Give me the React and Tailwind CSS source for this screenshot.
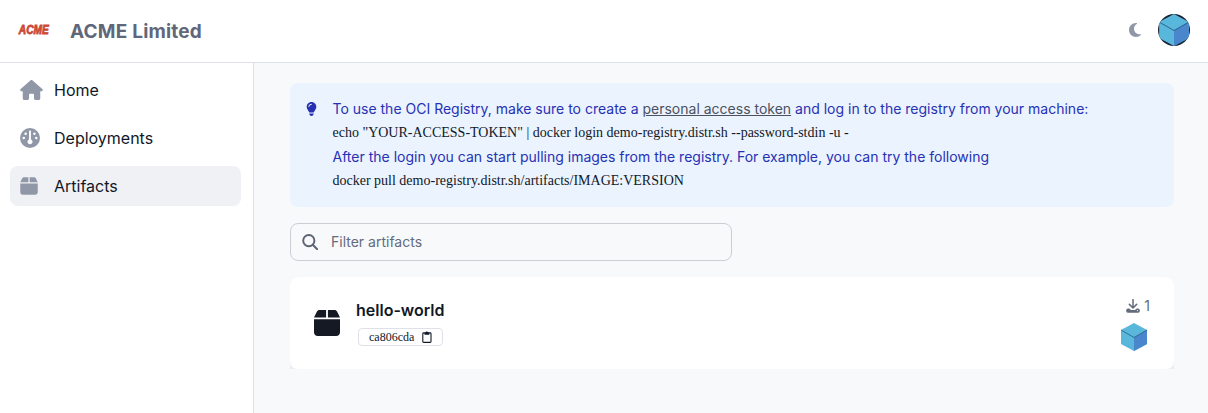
import { FaHouse, FaGauge, FaBox, FaMoon, FaLightbulb } from "react-icons/fa6";

function Cube({ className }) {
  return (
    <svg viewBox="0 0 26 28" className={className}>
      <path d="M13 0 26 7 26 21 13 28 0 21 0 7Z" fill="#59b7dc" />
      <path d="M26 7 26 21 13 28 13 14.5Z" fill="#4a86cb" />
      <path d="M0 7 13 14.5 26 7" fill="none" stroke="#285d86" strokeWidth=".8" />
    </svg>
  );
}

function NavItem({ icon, label, active }) {
  return (
    <a className={`flex h-10 items-center rounded-lg pl-[10px] text-base text-gray-900 ${active ? "bg-[#f0f1f5]" : ""}`}>
      <span className="flex w-[34px] text-[#9098a8]">{icon}</span>
      {label}
    </a>
  );
}

export default function App() {
  return (
    <div className="flex h-[413px] w-[1208px] flex-col overflow-hidden bg-[#f8f9fb] font-['Inter',sans-serif]">
      <header className="flex h-[63px] shrink-0 items-center border-b border-[#dfe1e8] bg-white pb-0.5 pl-[18px] pr-[18px]">
        <svg viewBox="0 0 34 16" className="mr-[18px] h-4 w-[34px] overflow-visible">
          <text x="0.8" y="12" textLength="30" lengthAdjust="spacingAndGlyphs" fill="#cb4936" stroke="#cb4936" strokeWidth=".8" fontFamily="Liberation Sans" fontWeight="700" fontStyle="italic" fontSize="12">ACME</text>
        </svg>
        <h1 className="pt-1 text-[19px] font-bold leading-7 tracking-[0.2px] text-[#606779]">ACME Limited</h1>
        <FaMoon className="ml-auto h-4 w-4 text-[#9098a8]" />
        <div className="ml-[15px] flex size-8 items-center justify-center overflow-hidden rounded-full bg-[#182033]">
          <Cube className="h-8 w-[30px]" />
        </div>
      </header>
      <div className="flex min-h-0 flex-1">
        <nav className="flex w-[254px] shrink-0 flex-col gap-2 border-r border-[#dfe1e8] bg-white pl-[10px] pr-3 pt-[7px]">
          <NavItem icon={<FaHouse className="h-5 w-[23px]" />} label="Home" />
          <NavItem icon={<FaGauge className="size-5" />} label="Deployments" />
          <NavItem icon={<FaBox className="h-5 w-[18px]" />} label="Artifacts" active />
        </nav>
        <main className="flex flex-1 flex-col gap-4 pl-9 pr-[34px] pt-5">
          <section className="flex h-[124px] shrink-0 rounded-lg bg-[#ebf3fe] pl-4 pt-[14px] text-sm">
            <FaLightbulb className="mr-[15.5px] mt-[5px] h-[14px] w-[11px] text-[#2630b0]" />
            <div className="leading-6 text-[#2731b5]">
              <p>
                To use the OCI Registry, make sure to create a <a className="text-[#4b5160] underline">personal access token</a> and log in to the registry from your machine:
              </p>
              <p className="font-['Liberation_Serif',serif] text-gray-900">echo "YOUR-ACCESS-TOKEN" | docker login demo-registry.distr.sh --password-stdin -u -</p>
              <p>After the login you can start pulling images from the registry. For example, you can try the following</p>
              <p className="font-['Liberation_Serif',serif] text-gray-900">docker pull demo-registry.distr.sh/artifacts/IMAGE:VERSION</p>
            </div>
          </section>
          <label className="flex h-[38px] w-[442px] shrink-0 items-center rounded-lg border border-[#cbced5] pl-[11px] text-sm text-[#646b7c]">
            <svg viewBox="0 0 20 20" className="mr-[13px] size-4 text-[#5b6273]" fill="none" stroke="currentColor" strokeWidth="2.4" strokeLinecap="round">
              <path d="m19 19-5.2-5.2M15.5 8.3a7 7 0 1 1-14 0 7 7 0 0 1 14 0Z" />
            </svg>
            Filter artifacts
          </label>
          <div className="shrink-0 rounded-t-lg bg-[#eceef2]">
            <article className="flex h-[92px] items-center rounded-lg bg-white pl-6 pr-[27px]">
              <FaBox className="h-[30px] w-[26px] text-[#151923]" />
              <div className="-mt-[3px] ml-4">
                <h2 className="text-base font-semibold leading-6 text-gray-900">hello-world</h2>
                <div className="ml-0.5 mt-[6px] flex h-[18px] w-[85px] items-center rounded border border-[#dfe1e8] pl-[10px] font-['Liberation_Serif',serif] text-xs text-gray-900">
                  ca806cda
                  <svg viewBox="0 0 10 12" className="ml-2 h-3 w-[10px]" fill="none" stroke="currentColor" strokeWidth="1.1">
                    <rect x=".8" y="1.9" width="8.2" height="9.5" rx=".9" />
                    <path d="M2.5 3.8V2L4 1.3 4.9.1l.9 1.2L7.3 2v1.8Z" fill="currentColor" stroke="none" />
                  </svg>
                </div>
              </div>
              <div className="-mt-0.5 ml-auto flex flex-col items-end gap-[5px]">
                <div className="-mr-[3px] flex items-center text-sm leading-6 text-[#646b7c]">
                  <svg viewBox="0 0 14 14" className="mr-1 size-[14px]" fill="none" stroke="currentColor">
                    <path d="M7 .6v8M3.4 5.4 7 9l3.6-3.6" strokeWidth="1.5" strokeLinecap="round" strokeLinejoin="round" />
                    <path d="M2 9.5h1.3L5 11h4l1.7-1.5H12a1.8 1.8 0 0 1 1.8 1.8v.8a1.6 1.6 0 0 1-1.6 1.6H1.8A1.6 1.6 0 0 1 .2 12.1v-.8A1.8 1.8 0 0 1 2 9.5Z" fill="currentColor" stroke="none" />
                    <circle cx="11.4" cy="11.6" r=".6" fill="#ffffff" stroke="none" />
                  </svg>
                  1
                </div>
                <Cube className="h-7 w-[26px]" />
              </div>
            </article>
          </div>
        </main>
      </div>
    </div>
  );
}
